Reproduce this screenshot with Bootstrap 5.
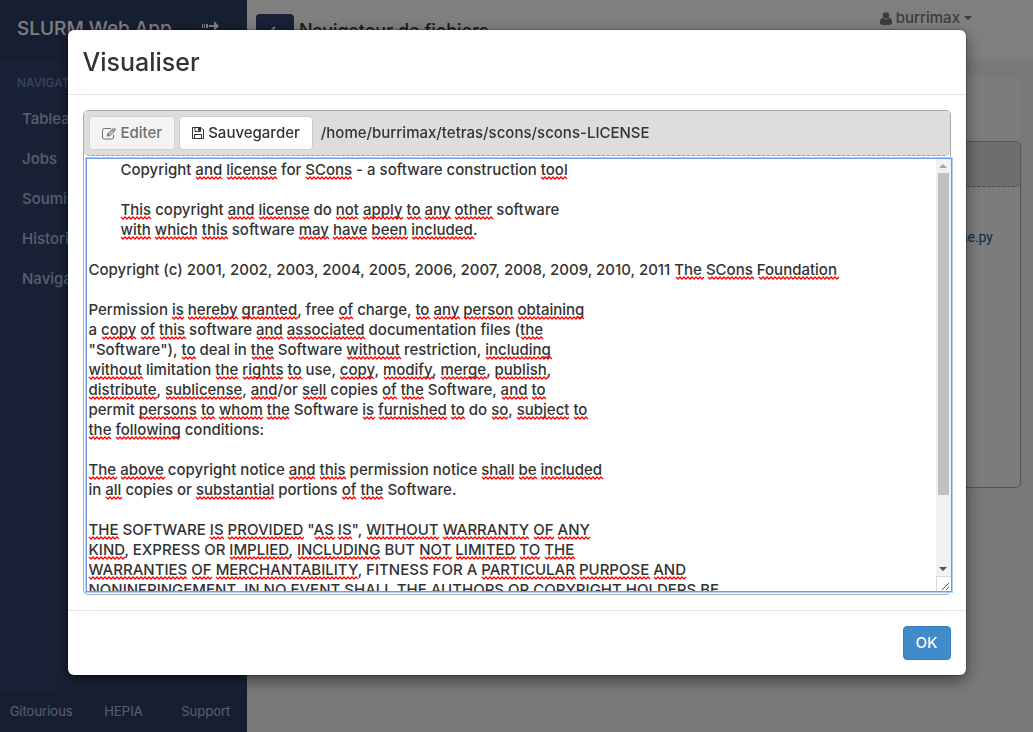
<!DOCTYPE html>
<html lang="fr">
<head>
<meta charset="utf-8">
<meta name="viewport" content="width=device-width, initial-scale=1">
<title>SLURM Web App</title>
<link href="https://cdn.jsdelivr.net/npm/bootstrap@5.3.0/dist/css/bootstrap.min.css" rel="stylesheet">
<style>
  body { font-family: Inter, "Open Sans", sans-serif; font-size: 15px; font-weight: 450; line-height: 20px; color: #333; background: #f3f3f3; }
  .side-menu { width: 247px; background: #30426a; }
  .side-brand { height: 59px; padding: 0 28px 2px 17px; background: #2d3e63; color: #fff; font-size: 19px; text-decoration: none; }
  .side-heading { padding: 14px 17px 6px; color: #738bc0; font-size: 12px; }
  .side-menu .nav-link { height: 40px; padding: 10px 22px; color: #b2bfdc; }
  .side-footer { height: 42px; background: #2d3e63; font-size: 13px; font-weight: 400; }
  .side-footer a { color: #b2bfdc; text-decoration: none; }
  .top-bar { height: 59px; background: #fff; }
  .top-back { width: 38px; height: 34px; margin: 14px 0 0 9px; background: #30426a; color: #fff; }
  .top-title { margin: 21px 0 0 5px; font-size: 18px; line-height: 20px; font-weight: 500; }
  .top-user { margin: 8px 61px 0 0; color: #777; text-decoration: none; }
  .widget { margin: 16px 11px 16px 12px; border: 1px solid #e9e9e9; background: #f9f9f9; }
  .widget-top { height: 65px; }
  .file-box { border: 1px solid #aaa; border-radius: 5px; }
  .file-bar { min-height: 45px; padding: 0 5px; background: #ddd; border-bottom: 1px dashed #999; border-radius: 5px; }
  .widget .file-box { min-height: 347px; }
  .file-list { padding: 40px 27px; font-family: Roboto, sans-serif; font-size: 14px; font-weight: 400; }
  .file-list a { color: #0a58a8; text-decoration: none; }
  .modal-dialog { max-width: 898px; margin: 30px auto; }
  .modal-content { border: 0; border-radius: 6px; color: #333; box-shadow: 0 5px 15px rgba(0,0,0,.5), 0 0 0 1px rgba(0,0,0,.2); }
  .modal-header { padding: 15px; border-color: #e5e5e5; border-radius: 0; }
  .modal-title { font-size: 25px; line-height: 34px; font-weight: 450; }
  .modal-body, .modal-footer { padding: 15px; }
  .modal-footer { border-color: #e5e5e5; }
  .modal-footer > * { margin: 0; }
  .btn { height: 34px; padding: 6px 12px; font-size: 15px; line-height: 20px; font-weight: 450; border-radius: 4px; }
  .btn-plain, .btn-plain:disabled { background: #fff; border-color: #ccc; color: #333; }
  .btn-ok { padding: 6px 12px; background: #428bca; border-color: #357ebd; color: #fff; font-weight: 500; }
  .editor { margin: 2px -2px 2px 2px; }
  .editor textarea { display: block; width: 100%; height: 434px; padding: 1px 2px; border: 1px solid #6d9be6; outline: 1px solid #b0ccfa; background: #fff; color: #333; font: inherit; white-space: pre; overflow-x: hidden; overflow-y: scroll; scrollbar-width: none; resize: none; }
  .editor canvas { left: 0; top: 0; pointer-events: none; }
  .scroll-rail { top: 1px; right: 1px; bottom: 1px; width: 15px; background: #f1f1f1; pointer-events: none; }
  .scroll-arrow { height: 14px; }
  .scroll-thumb { margin: 0 2px; background: #c1c1c1; }
  .scroll-corner { height: 15px; background: #fff; border: solid #d9d9d9; border-width: 1px 0 0 1px; }
</style>
</head>
<body>
<div class="d-flex vh-100 overflow-hidden">
  <aside class="side-menu d-flex flex-column flex-shrink-0">
    <a class="side-brand d-flex align-items-center justify-content-between" href="#">SLURM Web App
      <svg class="mb-1" width="17" height="12" viewBox="0 0 17 12" fill="currentColor" aria-hidden="true"><path d="M0 3h1v4H0zM2 3h1v4H2zM4 3h2v4H4zM7 4h5V0l5 5-5 5V6H7z"/></svg>
    </a>
    <div class="side-heading">NAVIGATION</div>
    <nav class="nav flex-column flex-nowrap flex-grow-1">
      <a class="nav-link" href="#">Tableau de bord</a>
      <a class="nav-link" href="#">Jobs</a>
      <a class="nav-link" href="#">Soumission</a>
      <a class="nav-link" href="#">Historique</a>
      <a class="nav-link" href="#">Navigateur</a>
    </nav>
    <div class="side-footer row g-0 align-items-center text-center">
      <a class="col" href="#">Gitourious</a>
      <a class="col" href="#">HEPIA</a>
      <a class="col" href="#">Support</a>
    </div>
  </aside>
  <main class="flex-grow-1">
    <header class="top-bar d-flex align-items-start">
      <button class="btn top-back p-0" type="button" aria-label="Retour">
        <svg width="14" height="12" viewBox="0 0 14 12" fill="none" stroke="currentColor" stroke-width="2" aria-hidden="true"><path d="M7 1L2 6l5 5M2 6h11"/></svg>
      </button>
      <h1 class="top-title">Navigateur de fichiers</h1>
      <a class="top-user ms-auto d-flex align-items-center gap-1" href="#">
        <svg width="12" height="13" viewBox="0 0 12 13" fill="currentColor" aria-hidden="true"><circle cx="6" cy="3.500" r="3.300"/><path d="M2.500 5.800C.6 6.500 0 8.500 0 10.500 0 12 1 13 2.300 13h7.400C11 13 12 12 12 10.500c0-2-.6-4-2.500-4.700a4.300 4.300 0 0 1-7 0z"/></svg>
        burrimax
        <svg width="8" height="4" viewBox="0 0 8 4" fill="currentColor" aria-hidden="true"><path d="M0 0h8L4 4z"/></svg>
      </a>
    </header>
    <section class="widget">
      <div class="widget-top"></div>
      <div class="file-box">
        <div class="file-bar"></div>
        <div class="file-list text-end"><a href="#">scons-time.py</a></div>
      </div>
    </section>
  </main>
</div>

<div class="modal-backdrop show"></div>
<div class="modal d-block" role="dialog" aria-modal="true" aria-labelledby="viewTitle">
  <div class="modal-dialog">
    <div class="modal-content">
      <div class="modal-header"><h2 class="modal-title" id="viewTitle">Visualiser</h2></div>
      <div class="modal-body">
        <div class="file-box">
          <div class="file-bar d-flex align-items-center gap-1">
            <button class="btn btn-plain d-flex align-items-center gap-1" type="button" disabled>
              <svg width="15" height="13" viewBox="0 0 15 13" fill="none" stroke="currentColor" aria-hidden="true"><path d="M11.500 7.500v2.500a2 2 0 0 1-2 2h-7a2 2 0 0 1-2-2V3.500a2 2 0 0 1 2-2h6.500"/><path d="M5.500 7L11 1.500l2 2L7.500 9h-2z" fill="currentColor" fill-opacity=".4"/><path d="M5.500 7l2 2M10 2.500l2 2M12 .8l2 2"/></svg>
              Editer
            </button>
            <button class="btn btn-plain d-flex align-items-center gap-1" type="button">
              <svg width="12" height="12" viewBox="0 0 12 12" fill="none" stroke="currentColor" aria-hidden="true"><path d="M.5.5h8.500l2.500 2.500v8.500H.5zM3 .5v4h5.500v-4M2.500 11.500v-4h7v4"/><path d="M6.500 1h1v2.500h-1z" fill="currentColor"/></svg>
              Sauvegarder
            </button>
            <label class="ms-1" for="fileText">/home/burrimax/tetras/scons/scons-LICENSE</label>
          </div>
          <div class="editor position-relative">
<textarea id="fileText" spellcheck="false">
        Copyright and license for SCons - a software construction tool

        This copyright and license do not apply to any other software
        with which this software may have been included.

Copyright (c) 2001, 2002, 2003, 2004, 2005, 2006, 2007, 2008, 2009, 2010, 2011 The SCons Foundation

Permission is hereby granted, free of charge, to any person obtaining
a copy of this software and associated documentation files (the
"Software"), to deal in the Software without restriction, including
without limitation the rights to use, copy, modify, merge, publish,
distribute, sublicense, and/or sell copies of the Software, and to
permit persons to whom the Software is furnished to do so, subject to
the following conditions:

The above copyright notice and this permission notice shall be included
in all copies or substantial portions of the Software.

THE SOFTWARE IS PROVIDED "AS IS", WITHOUT WARRANTY OF ANY
KIND, EXPRESS OR IMPLIED, INCLUDING BUT NOT LIMITED TO THE
WARRANTIES OF MERCHANTABILITY, FITNESS FOR A PARTICULAR PURPOSE AND
NONINFRINGEMENT. IN NO EVENT SHALL THE AUTHORS OR COPYRIGHT HOLDERS BE
LIABLE FOR ANY CLAIM, DAMAGES OR OTHER LIABILITY, WHETHER IN AN ACTION
OF CONTRACT, TORT OR OTHERWISE, ARISING FROM, OUT OF OR IN CONNECTION
WITH THE SOFTWARE OR THE USE OR OTHER DEALINGS IN THE SOFTWARE.
</textarea>
            <canvas id="spelling" class="position-absolute" aria-hidden="true"></canvas>
            <div class="scroll-rail position-absolute d-flex flex-column" aria-hidden="true">
              <div class="scroll-arrow d-flex align-items-center justify-content-center"><svg width="8" height="4" viewBox="0 0 8 4"><path d="M0 4l4-4 4 4z" fill="#a3a3a3"/></svg></div>
              <div class="flex-grow-1" id="track"><div class="scroll-thumb" id="thumb"></div></div>
              <div class="scroll-arrow d-flex align-items-center justify-content-center"><svg width="8" height="4" viewBox="0 0 8 4"><path d="M0 0h8L4 4z" fill="#505050"/></svg></div>
              <div class="scroll-corner d-flex align-items-end justify-content-end"><svg width="9" height="9" viewBox="0 0 9 9" stroke="#555" fill="none"><path d="M0 8l7-7M4 8l3-3"/></svg></div>
            </div>
          </div>
        </div>
      </div>
      <div class="modal-footer"><button class="btn btn-ok" type="button">OK</button></div>
    </div>
  </div>
</div>
<script src="https://cdn.jsdelivr.net/npm/bootstrap@5.3.0/dist/js/bootstrap.bundle.min.js"></script>
<script>
  // French spelling marks: every word outside this list gets a red wavy line.
  const known = new Set(('copyright for a c software construction do permission free charge documentation files deal in ' +
    'restriction limitation use copies permit conditions notice or portions express but fitness').split(' '));
  const area = document.getElementById('fileText');
  const canvas = document.getElementById('spelling');
  const track = document.getElementById('track');
  const thumb = document.getElementById('thumb');
  function drawMarks() {
    const style = getComputedStyle(area);
    const lineHeight = parseInt(style.lineHeight);
    canvas.width = area.clientWidth;
    canvas.height = area.clientHeight + 1;
    const ctx = canvas.getContext('2d');
    ctx.font = style.fontWeight + ' ' + style.fontSize + ' ' + style.fontFamily;
    ctx.strokeStyle = '#ff0000';
    ctx.lineWidth = 1.25;
    area.value.split('\n').forEach((line, row) => {
      const y = 2 + row * lineHeight + lineHeight - 2 - area.scrollTop;
      for (const m of line.matchAll(/[A-Za-z]+/g)) {
        if (known.has(m[0].toLowerCase())) continue;
        const start = Math.round(3 + ctx.measureText(line.slice(0, m.index)).width);
        const end = Math.round(start + ctx.measureText(m[0]).width);
        ctx.beginPath();
        for (let x = start, i = 0; x <= end; x += 2, i++) ctx.lineTo(x, y + (i % 2 ? 1 : -1));
        ctx.stroke();
      }
    });
    const scale = track.clientHeight / area.scrollHeight;
    thumb.style.height = Math.round(area.clientHeight * scale) + 'px';
    thumb.style.transform = 'translateY(' + Math.round(area.scrollTop * scale) + 'px)';
  }
  area.addEventListener('scroll', drawMarks);
  area.addEventListener('input', drawMarks);
  new ResizeObserver(drawMarks).observe(area);
  document.fonts.ready.then(drawMarks);
</script>
</body>
</html>
